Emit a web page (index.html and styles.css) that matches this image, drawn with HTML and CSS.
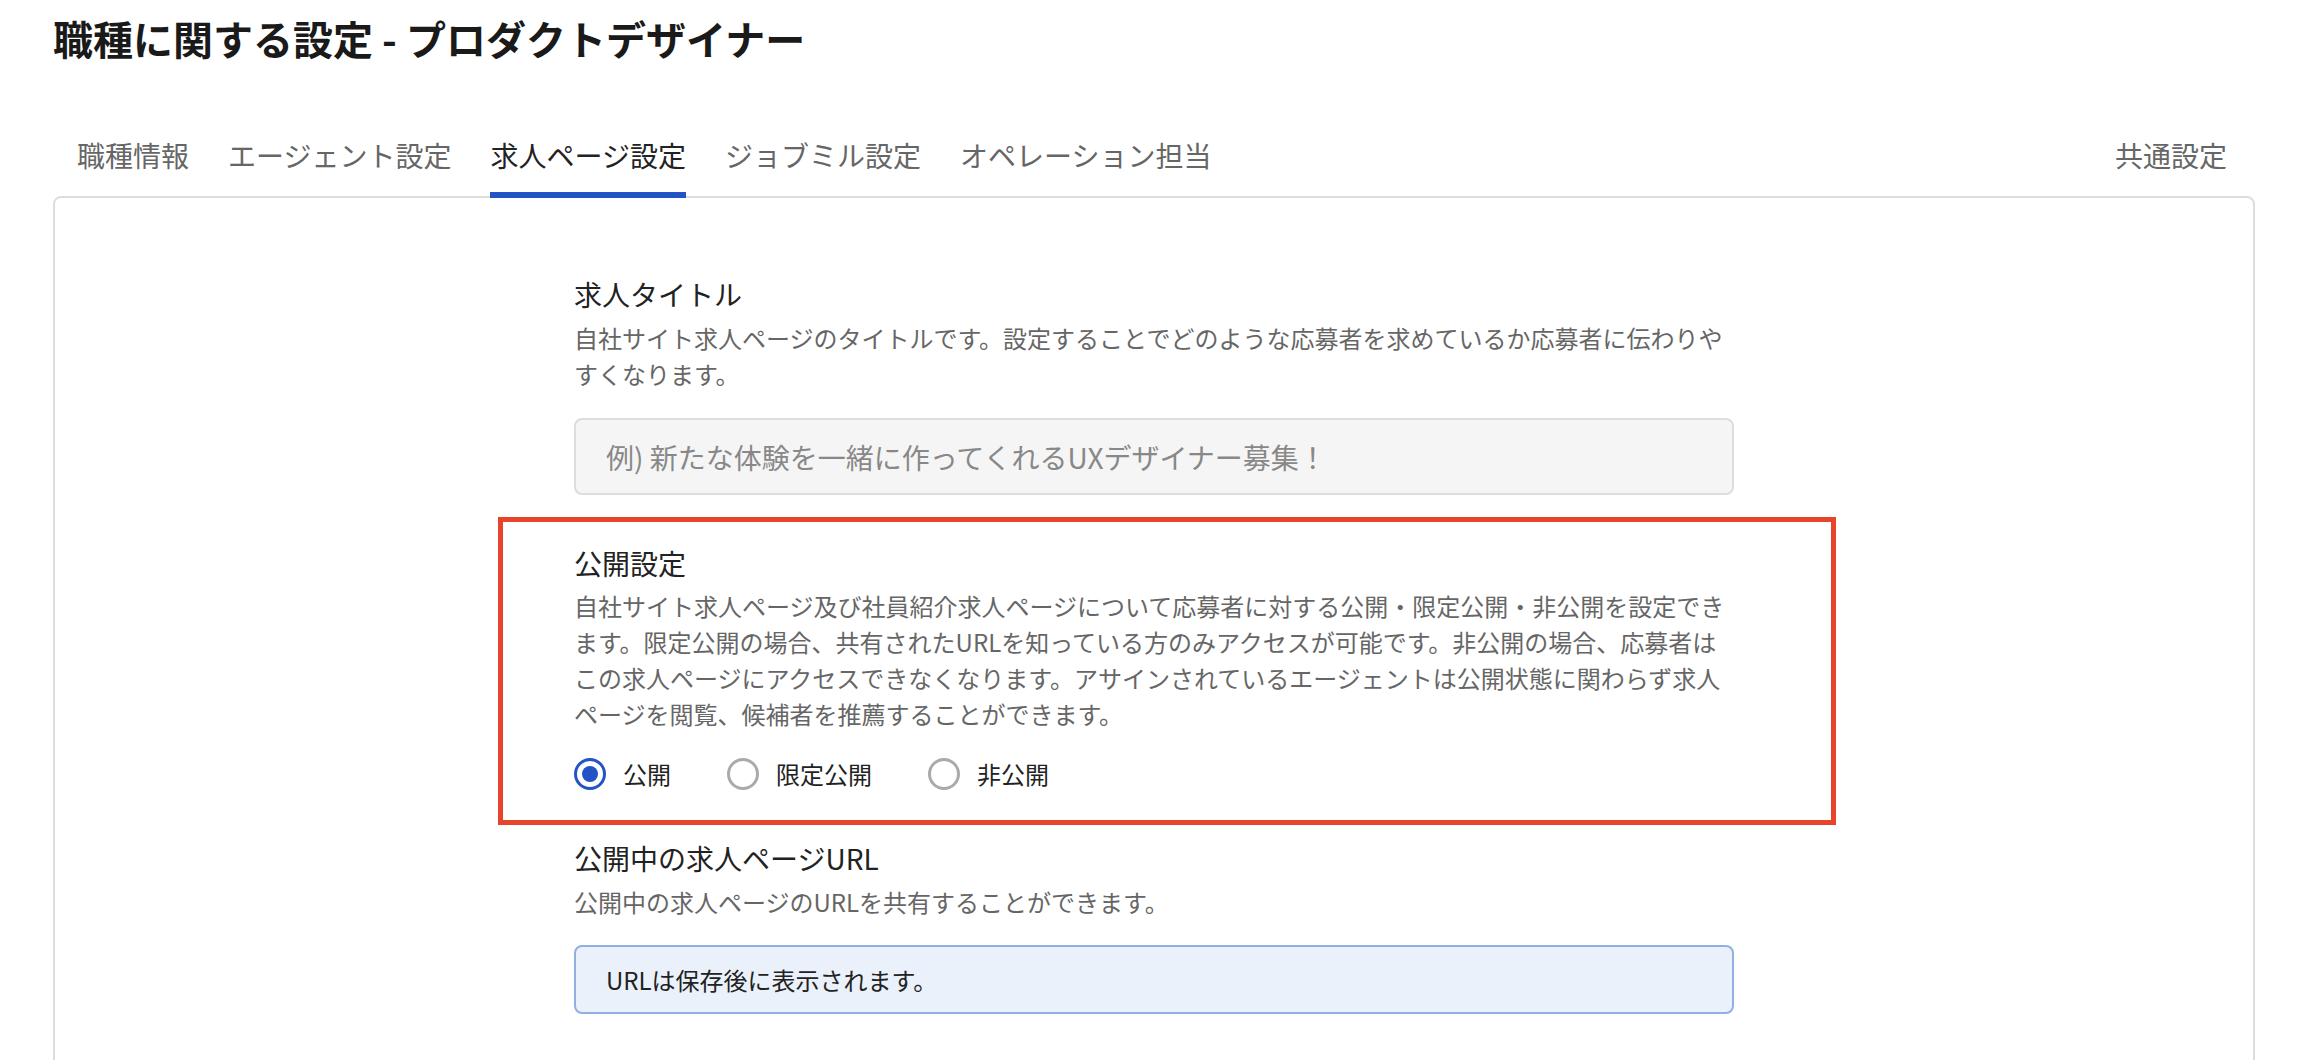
FILE: index.html
```html
<!DOCTYPE html>
<html lang="ja">
<head>
    <meta charset="UTF-8">
    <meta name="viewport" content="width=device-width, initial-scale=1.0">
    <title>職種に関する設定 - プロダクトデザイナー</title>
    <link rel="stylesheet" href="styles.css">
</head>
<body>
    <div class="page">
        <h1 class="page-title">職種に関する設定 - プロダクトデザイナー</h1>

        <nav class="tabs">
            <a class="tab" href="#">職種情報</a>
            <a class="tab" href="#">エージェント設定</a>
            <a class="tab active" href="#">求人ページ設定</a>
            <a class="tab" href="#">ジョブミル設定</a>
            <a class="tab" href="#">オペレーション担当</a>
            <a class="tab tab-right" href="#">共通設定</a>
        </nav>

        <div class="panel">
            <div class="form">
                <section class="field">
                    <h2 class="field-label">求人タイトル</h2>
                    <p class="field-help">自社サイト求人ページのタイトルです。設定することでどのような応募者を求めているか応募者に伝わりやすくなります。</p>
                    <input class="text-input" type="text" placeholder="例) 新たな体験を一緒に作ってくれるUXデザイナー募集！">
                </section>

                <section class="field highlighted">
                    <h2 class="field-label">公開設定</h2>
                    <p class="field-help">自社サイト求人ページ及び社員紹介求人ページについて応募者に対する公開・限定公開・非公開を設定できます。限定公開の場合、共有されたURLを知っている方のみアクセスが可能です。非公開の場合、応募者はこの求人ページにアクセスできなくなります。アサインされているエージェントは公開状態に関わらず求人ページを閲覧、候補者を推薦することができます。</p>
                    <div class="radio-group">
                        <label class="radio"><input type="radio" name="visibility" checked> 公開</label>
                        <label class="radio"><input type="radio" name="visibility"> 限定公開</label>
                        <label class="radio"><input type="radio" name="visibility"> 非公開</label>
                    </div>
                </section>

                <section class="field">
                    <h2 class="field-label">公開中の求人ページURL</h2>
                    <p class="field-help">公開中の求人ページのURLを共有することができます。</p>
                    <div class="url-box">URLは保存後に表示されます。</div>
                </section>
            </div>
        </div>
    </div>
</body>
</html>
```

FILE: styles.css
```css
body {
    margin: 0;
    font-family: "Noto Sans CJK JP", "Noto Sans", sans-serif;
    color: #222;
    background-color: #fff;
}
.page {
    padding: 10px 53px 0;
}
.page-title {
    font-size: 40px;
    font-weight: bold;
    line-height: 56px;
    margin: 0 0 68px;
    color: #1a1a1a;
}

/* タブ */
.tabs {
    display: flex;
    gap: 39px;
    padding: 0 28px 0 24px;
    position: relative;
    z-index: 1;
}
.tab {
    font-size: 28px;
    line-height: 42px;
    color: #666;
    text-decoration: none;
    padding-bottom: 16px;
    border-bottom: 6px solid transparent;
}
.tab.active {
    color: #222;
    border-bottom-color: #2254c5;
}
.tab-right {
    margin-left: auto;
}

/* パネル */
.panel {
    margin-top: -2px;
    border: 2px solid #ddd;
    border-radius: 8px;
    padding: 75px 0 90px;
}
.form {
    width: 1160px;
    margin: 0 auto;
}
.field {
    margin-bottom: 47px;
}
.field-label {
    font-size: 28px;
    font-weight: normal;
    line-height: 42px;
    margin: 0;
    color: #222;
}
.field-help {
    font-size: 24px;
    line-height: 36px;
    color: #666;
    margin: 5px 0 0;
}
.text-input {
    display: block;
    box-sizing: border-box;
    width: 100%;
    height: 77px;
    margin-top: 26px;
    padding: 0 30px;
    font-family: inherit;
    font-size: 28px;
    background: #f5f5f5;
    border: 2px solid #ddd;
    border-radius: 8px;
}
.text-input::placeholder {
    color: #888;
}

/* 赤枠で囲まれた設定 */
.highlighted {
    position: relative;
}
.highlighted::before {
    content: "";
    position: absolute;
    top: -25px;
    bottom: -35px;
    left: -76px;
    right: -102px;
    border: 5px solid #e8442b;
    pointer-events: none;
}
.highlighted .field-help {
    margin-top: 4px;
}

/* ラジオボタン */
.radio-group {
    display: flex;
    gap: 56px;
    margin-top: 26px;
}
.radio {
    display: flex;
    align-items: center;
    gap: 17px;
    font-size: 24px;
    line-height: 32px;
    color: #222;
}
.radio input {
    appearance: none;
    margin: 0;
    width: 32px;
    height: 32px;
    border: 3px solid #aaa;
    border-radius: 50%;
    box-sizing: border-box;
    display: grid;
    place-items: center;
}
.radio input:checked {
    border-color: #2254c5;
}
.radio input:checked::after {
    content: "";
    width: 16px;
    height: 16px;
    border-radius: 50%;
    background: #2254c5;
}

.url-box {
    box-sizing: border-box;
    height: 69px;
    margin-top: 25px;
    padding: 0 30px;
    display: flex;
    align-items: center;
    font-size: 24px;
    color: #222;
    background: #ebf1fa;
    border: 2px solid #8fb0e0;
    border-radius: 8px;
}
```
